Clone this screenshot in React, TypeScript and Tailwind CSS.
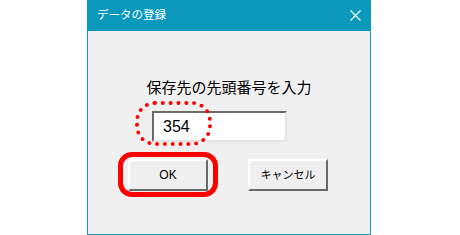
export default function App() {
  return (
    <div className="h-[235px] w-[460px] bg-white font-['Liberation_Sans','Noto_Sans_CJK_JP',sans-serif]">
      <div className="ml-[87px] flex h-[235px] w-[284px] flex-col border-x border-b border-[#1b9cc2] bg-[#f0f0f0]">
        <div className="-mx-px flex h-[31px] items-center justify-between bg-[#0a99bd] pl-[10px] pr-[10px] text-white">
          <span className="text-[11.5px] leading-none">データの登録</span>
          <svg width="11" height="11" viewBox="0 0 11 11" className="mb-px">
            <path d="M0.5 0.5 L10.5 10.5 M10.5 0.5 L0.5 10.5" stroke="white" strokeWidth="1.1" fill="none" />
          </svg>
        </div>

        <div className="mt-[47px] text-center text-[15px] leading-[20px] text-black">保存先の先頭番号を入力</div>

        <div className="relative ml-[64px] mt-[13px] h-[31px] w-[135px]">
          <div className="flex h-full w-full items-center border-2 border-t-[#6b6b6b] border-l-[#6b6b6b] border-r-[#e3e3e3] border-b-[#e3e3e3] bg-white pl-[9px] text-[16px] text-black">
            354
          </div>
          <div className="absolute -left-[17px] -top-[10px] h-[45px] w-[77px] rounded-[20px] border-[4px] border-dotted border-[#ff0000]" />
        </div>

        <div className="ml-[40px] mt-[17px] flex gap-[40px]">
          <div className="relative">
            <button
              type="button"
              className="flex h-[32px] w-[80px] items-center justify-center border-2 border-t-white border-l-white border-b-[#696969] border-r-[#696969] bg-[#efefef] text-[12px] text-black"
            >
              OK
            </button>
            <div className="absolute -left-[10px] -top-[7px] h-[45px] w-[100px] rounded-[14px] border-[5px] border-[#ff0000]" />
          </div>
          <button
            type="button"
            className="flex h-[32px] w-[80px] items-center justify-center border-2 border-t-white border-l-white border-b-[#696969] border-r-[#696969] bg-[#efefef] text-[11px] text-black"
          >
            キャンセル
          </button>
        </div>
      </div>
    </div>
  );
}
